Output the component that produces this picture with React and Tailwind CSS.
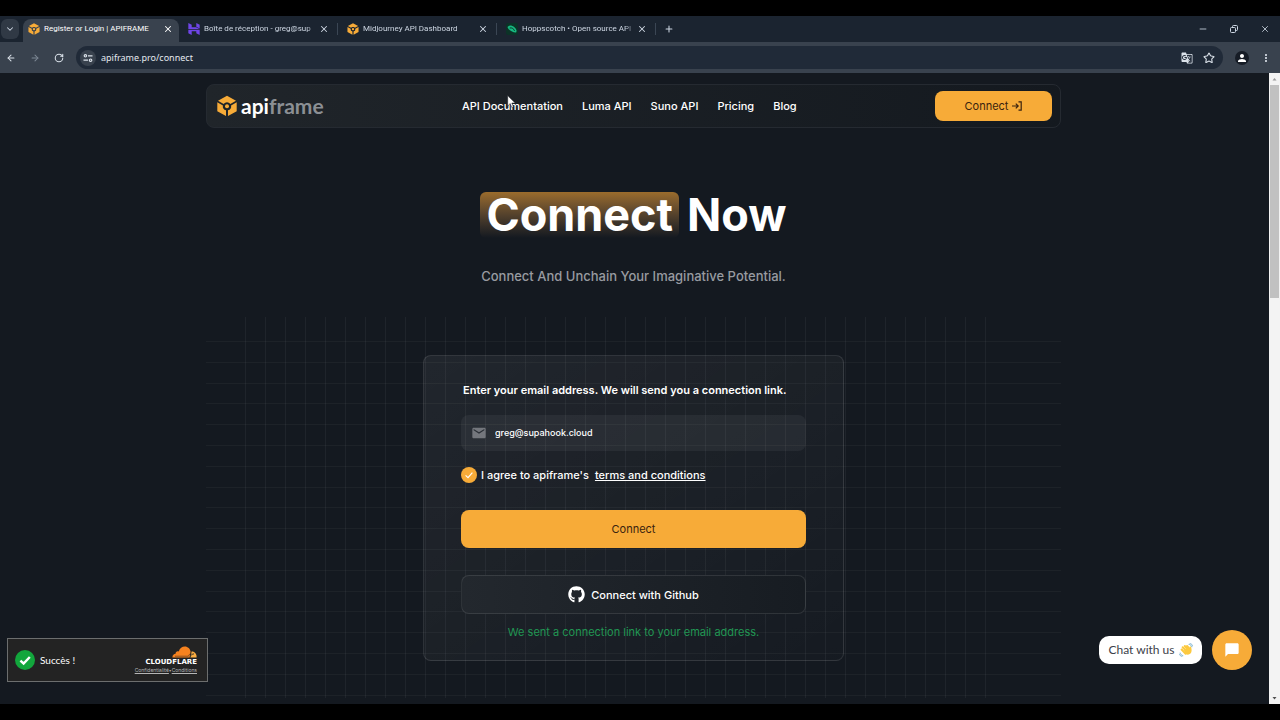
import { ArrowLeft, ArrowRight, RotateCw, ChevronDown, X, Plus, Minus, Star } from "lucide-react";
import { MdEmail, MdChatBubble, MdPerson, MdMoreVert, MdGTranslate } from "react-icons/md";
import { FaGithub } from "react-icons/fa";

function Cube({ className, hole = "#14191f" }) {
  return (
    <svg viewBox="0 0 20 21" className={className} aria-hidden="true">
      <path d="M10 0.3 19 5.2 13.3 8.4A4.2 4.2 0 0 0 6.7 8.4L1 5.2Z" fill="#f7ab38" />
      <path d="M0.3 6.8 5.9 10A4.2 4.2 0 0 0 9 14.8V20.6L0.3 15.8Z" fill="#f7ab38" />
      <path d="M19.7 6.8 14.1 10A4.2 4.2 0 0 1 11 14.8V20.6L19.7 15.8Z" fill="#f7ab38" />
      <circle cx="10" cy="10.8" r="3.3" fill={hole} />
      <circle cx="10" cy="10.8" r="2" fill="#f7ab38" />
    </svg>
  );
}

function HostingerMark({ className }) {
  return (
    <svg viewBox="0 0 11 11" className={className} aria-hidden="true">
      <path d="M0.3 0 3.4 1.6V4H7.4L10.5 5.6H0.3Z" fill="#6f45e8" />
      <path d="M7.6 0 10.7 1.6V5L7.6 3.4Z" fill="#6f45e8" />
      <path d="M0.3 6.2H10.7V11L7.6 9.4V7.6H3.4V11L0.3 9.4Z" fill="#6f45e8" />
    </svg>
  );
}

function HoppscotchMark({ className }) {
  return (
    <svg viewBox="0 0 11 11" className={className} aria-hidden="true">
      <rect width="11" height="11" rx="2" fill="#0c3327" />
      <path d="M1.4 3.6C3 1.6 5.2 2 7.4 3.6 9.6 5.2 10.2 7.2 9.2 8.8 7 9 2.4 7.2 1.4 3.6Z" fill="#16b981" />
      <path d="M3.4 4.6C5.2 4 7.4 5.4 7.8 7.2" fill="none" stroke="#0c3327" strokeWidth="0.9" />
    </svg>
  );
}

const tabs = [
  { title: "Register or Login | APIFRAME", icon: <Cube className="size-3 shrink-0" hole="#39424e" />, active: true },
  { title: "Boîte de réception - greg@sup", icon: <HostingerMark className="size-3 shrink-0" /> },
  { title: "Midjourney API Dashboard", icon: <Cube className="size-3 shrink-0" hole="#1b2430" /> },
  { title: "Hoppscotch • Open source API", icon: <HoppscotchMark className="size-3 shrink-0" /> },
];

function TabBar() {
  return (
    <div className="flex h-[26px] items-center bg-[#1b2430] text-[#cdd6e2]">
      <button aria-label="Search tabs" className="ml-px flex h-5 w-[18px] items-center justify-center rounded-md bg-[#303945]">
        <ChevronDown className="size-2.5" strokeWidth={2.5} />
      </button>
      <div className="ml-1 flex h-full pt-[3px] font-['Roboto',sans-serif] text-[8px]">
        {tabs.map((tab) => (
          <div
            key={tab.title}
            className={
              tab.active
                ? "flex w-[156px] items-center rounded-t-lg bg-[#39424e] pr-1.5 pb-[3px] pl-[5px] text-white"
                : "flex w-[159px] items-center pb-[3px] pl-[9px]"
            }
          >
            {tab.icon}
            <span
              className={
                tab.active
                  ? "ml-1 w-[114px] whitespace-nowrap"
                  : "ml-1 w-[114px] whitespace-nowrap [mask-image:linear-gradient(to_right,black_90%,transparent)]"
              }
            >
              {tab.title}
            </span>
            <button aria-label="Close tab" className="ml-auto">
              <X className="size-2.5" strokeWidth={2.5} />
            </button>
            {!tab.active && <span className="ml-2 h-3 w-px bg-[#3b4654]" />}
          </div>
        ))}
      </div>
      <button aria-label="New tab" className="ml-2">
        <Plus className="size-2.5" strokeWidth={2.5} />
      </button>
      <div className="ml-auto flex items-center gap-[21px] pr-2.5">
        <button aria-label="Minimize"><Minus className="size-2.5" /></button>
        <button aria-label="Restore">
          <svg viewBox="0 0 10 10" className="size-2.5" fill="none" stroke="currentColor">
            <rect x="1.5" y="3.5" width="5" height="5" rx="1" />
            <path d="M3.5 3V2.5a1 1 0 0 1 1-1h3a1 1 0 0 1 1 1v3a1 1 0 0 1-1 1H7" />
          </svg>
        </button>
        <button aria-label="Close"><X className="size-2.5" /></button>
      </div>
    </div>
  );
}

function Toolbar() {
  return (
    <div className="flex h-[31px] items-center bg-[#39424e] pr-2 text-[#dbe2ea]">
      <div className="flex items-center gap-3.5 pl-1.5">
        <button aria-label="Back"><ArrowLeft className="size-2.5" strokeWidth={2.5} /></button>
        <button aria-label="Forward" className="text-[#7d8794]"><ArrowRight className="size-2.5" strokeWidth={2.5} /></button>
        <button aria-label="Reload"><RotateCw className="size-2.5" strokeWidth={2.5} /></button>
      </div>
      <div className="ml-3 flex h-[23px] flex-1 items-center rounded-full bg-[#202a38] pr-2 pl-1">
        <button aria-label="Site information" className="flex size-4 items-center justify-center rounded-full bg-[#39424e]">
          <svg viewBox="0 0 10 10" className="size-2.5" fill="none" stroke="currentColor" strokeWidth="1.2">
            <circle cx="2.4" cy="2.8" r="1.2" />
            <path d="M5 2.8h4.5M0.5 7.2H5" />
            <circle cx="7.6" cy="7.2" r="1.2" />
          </svg>
        </button>
        <input
          aria-label="Address"
          defaultValue="apiframe.pro/connect"
          className="ml-[5px] min-w-0 flex-1 bg-transparent font-['Noto_Sans',sans-serif] text-[9px] text-[#e3e8ee] outline-none"
        />
        <button aria-label="Translate"><MdGTranslate className="size-3" /></button>
        <button aria-label="Bookmark" className="ml-2.5"><Star className="size-3" strokeWidth={2.2} /></button>
      </div>
      <button aria-label="Profile" className="ml-3 flex size-3.5 items-center justify-center rounded-full bg-[#161c26] text-white">
        <MdPerson className="size-3" />
      </button>
      <button aria-label="Menu" className="ml-[11px]"><MdMoreVert className="size-3" /></button>
    </div>
  );
}

const links = ["API Documentation", "Luma API", "Suno API", "Pricing", "Blog"];

function Nav() {
  return (
    <nav className="flex h-11 items-center rounded-lg border border-[#252a31] bg-linear-to-r from-[#20252a] to-[#14191f] pr-2 pl-2.5">
      <a href="#" className="flex items-center gap-1 font-['Lato',sans-serif] text-[21px] leading-6 font-bold text-white">
        <Cube className="h-[22px] w-5" hole="#1e2328" />
        <span>api<span className="text-[#8b8f94]">frame</span></span>
      </a>
      <ul className="ml-auto flex gap-[19px] text-[11px] leading-4 font-medium text-white">
        {links.map((link) => (
          <li key={link}><a href="#">{link}</a></li>
        ))}
      </ul>
      <button className="ml-auto flex h-[30px] w-[117px] items-center justify-center gap-1 rounded-lg bg-[#f7ab38] text-[11px] text-[#3a230f]">
        Connect
        <svg viewBox="0 0 10 10" className="size-2.5" fill="none" stroke="currentColor" strokeWidth="1.2">
          <path d="M0 5h6M3.8 2.6 6.2 5 3.8 7.4M6.5 0.8H9.2V9.2H6.5" />
        </svg>
      </button>
    </nav>
  );
}

function GridLines() {
  const columns = Array.from({ length: 38 }, (_, i) => 39 + i * 20);
  const rows = Array.from({ length: 18 }, (_, i) => 24 + Math.round(i * 20.8));
  return (
    <svg className="absolute inset-0 size-full" aria-hidden="true">
      {columns.map((x) => (
        <rect key={x} x={x} y="0" width="1" height="100%" fill="#ffffff" fillOpacity="0.05" />
      ))}
      {rows.map((y) => (
        <rect key={y} x="0" y={y} width="100%" height="1" fill="#ffffff" fillOpacity="0.04" />
      ))}
    </svg>
  );
}

function ConnectForm() {
  return (
    <form
      onSubmit={(e) => e.preventDefault()}
      className="relative mx-auto w-full max-w-[421px] rounded-lg border border-white/10 bg-linear-to-br from-white/6 to-white/1 px-[37px] pt-6 pb-[18px] text-[11px] leading-5 text-white"
    >
      <label htmlFor="email" className="block pl-0.5 font-semibold">
        Enter your email address. We will send you a connection link.
      </label>
      <div className="mt-[15px] flex h-9 items-center rounded-lg bg-white/5 pl-2.5">
        <MdEmail className="size-4 text-[#74777d]" />
        <input
          id="email"
          type="email"
          defaultValue="greg@supahook.cloud"
          className="ml-2 min-w-0 flex-1 bg-transparent text-[9px] font-medium outline-none"
        />
      </div>
      <div className="mt-4 flex h-4 items-center font-medium">
        <span className="grid size-4">
          <input
            id="terms"
            type="checkbox"
            defaultChecked
            className="col-start-1 row-start-1 size-4 appearance-none rounded-full bg-[#f7ab38]"
          />
          <svg viewBox="0 0 16 16" className="pointer-events-none col-start-1 row-start-1 size-4" fill="none" stroke="#fff" strokeWidth="1.1">
            <path d="M4.6 8.4 7 10.6 11.4 5.6" />
          </svg>
        </span>
        <label htmlFor="terms" className="ml-1">I agree to apiframe's</label>
        <a href="#" className="ml-1.5 underline">terms and conditions</a>
      </div>
      <button type="submit" className="mt-[27px] block h-[38px] w-full rounded-lg bg-[#f7ab38] text-[#3a230f]">
        Connect
      </button>
      <button type="button" className="mt-[27px] flex h-[39px] w-full items-center justify-center gap-1.5 rounded-lg border border-white/10 bg-linear-to-r from-[#23282e] to-[#171c22] font-medium">
        <FaGithub className="size-[17px]" />
        Connect with Github
      </button>
      <p className="mt-2 text-center text-[#219653]">We sent a connection link to your email address.</p>
    </form>
  );
}

function TurnstileBadge() {
  return (
    <div className="absolute bottom-[22px] left-[7px] flex h-11 w-[201px] items-center border border-[#6c6e6e] bg-[#232323] pr-2.5 pl-[7px] font-['Lato',sans-serif] text-white">
      <svg viewBox="0 0 20 20" className="size-5" aria-hidden="true">
        <circle cx="10" cy="10" r="10" fill="#12a63c" />
        <path d="M5.4 10.6 8.6 13.5 14.8 7" fill="none" stroke="#fff" strokeWidth="2.4" />
      </svg>
      <span className="ml-[5px] text-[10px]">Succès !</span>
      <div className="ml-auto flex flex-col items-end">
        <svg viewBox="0 0 25 12" className="h-3 w-[25px]" aria-hidden="true">
          <path d="M0.4 11.6C0.4 9 2 7.8 3.6 7.8 3.4 5.6 5.6 4.8 6.8 5.6 7.6 2 10.2 0.4 12.8 0.4 16 0.4 18.2 2.8 18.6 5.6L17.6 11.6Z" fill="#f6821f" />
          <path d="M18.4 11.6 19.6 5.6C22.6 5.4 24.8 8 24.6 11.6Z" fill="#fbad41" />
          <path d="M3 10.2H16.4L17.4 8.4 22 7.8 18.8 9.4 18.2 11" fill="none" stroke="#232323" strokeWidth="0.5" />
        </svg>
        <span className="font-['DejaVu_Sans',sans-serif] text-[7px] leading-[9px] font-bold">CLOUDFLARE</span>
        <span className="font-['Inter',sans-serif] text-[5px] leading-[7px] text-[#b5b5b5]">
          <a href="#" className="underline">Confidentialité</a>•<a href="#" className="underline">Conditions</a>
        </span>
      </div>
    </div>
  );
}

function WavingHand({ className }) {
  return (
    <svg viewBox="0 0 16 16" className={className} aria-hidden="true" fill="none">
      <path d="M3 7.5 7.6 12.2M4.2 4.8 9 9.6M6.6 3.4 11 8M9.2 3.4 12 6.4" stroke="#fcc93f" strokeWidth="2.3" strokeLinecap="round" />
      <path d="M5.6 8 10.4 4.6 12.2 6.4 12.4 3.6C14 3.6 14.4 6 14.4 8.6 14.4 12.4 10.6 14.8 7.6 12.4Z" fill="#fcc93f" />
      <path d="M11.4 1.6C13 1.6 14.4 2.8 14.6 4.4M12.6 0.6C14.4 0.8 15.4 2 15.6 3.4M1.4 11.4C1.6 13 2.8 14.2 4.4 14.4M0.6 12.8C1 14.4 2 15.2 3.4 15.4" stroke="#5b9fc4" strokeWidth="0.8" strokeLinecap="round" />
    </svg>
  );
}

function ChatWidget() {
  return (
    <div className="absolute right-[17px] bottom-[34px] flex items-center gap-2.5">
      <div className="flex h-7 w-[103px] items-center justify-center gap-1 rounded-[10px] bg-white font-['Lato',sans-serif] text-[12px] text-[#3c4048]">
        Chat with us
        <WavingHand className="size-3.5" />
      </div>
      <button aria-label="Open chat" className="flex size-10 items-center justify-center rounded-full bg-[#f7ab38] text-white">
        <MdChatBubble className="size-4" />
      </button>
    </div>
  );
}

function Scrollbar() {
  return (
    <div className="flex w-[11px] flex-col items-center bg-[#f3f3f3]">
      <svg viewBox="0 0 11 12" className="h-3 w-[11px]" aria-hidden="true"><path d="M3.5 7.5 5.5 5 7.5 7.5Z" fill="#9a9a9a" /></svg>
      <div className="h-[213px] w-[9px] bg-[#c1c1c1]" />
      <svg viewBox="0 0 11 12" className="mt-auto h-3 w-[11px]" aria-hidden="true"><path d="M3.5 5 5.5 7.5 7.5 5Z" fill="#505050" /></svg>
    </div>
  );
}

function Cursor() {
  return (
    <svg viewBox="0 0 9 14" className="pointer-events-none absolute top-[95px] left-[507px] h-3.5 w-[9px]" aria-hidden="true">
      <path d="M0.7 0.6V11L3.2 8.6 4.8 12.4 6.4 11.7 4.8 8H8.2Z" fill="#fff" stroke="#14191f" strokeWidth="0.5" />
    </svg>
  );
}

export default function App() {
  return (
    <div className="relative flex min-h-screen flex-col bg-black py-4">
      <header>
        <TabBar />
        <Toolbar />
      </header>
      <div className="flex flex-1">
        <main className="relative flex-1 bg-[#141920] pt-[11px] pr-0.5 font-['Inter',sans-serif]">
          <div className="mx-auto w-full max-w-[855px]">
            <Nav />
            <h1 className="mt-16 flex justify-center gap-2 text-[45px] leading-[46px] font-bold text-white">
              <span className="rounded-md bg-linear-to-b from-[#9b6c2c] to-[#141920] px-1.5">Connect</span>
              <span>Now</span>
            </h1>
            <p className="mt-7 text-center text-[13px] leading-5 font-medium text-[#989ba0]">
              Connect And Unchain Your Imaginative Potential.
            </p>
            <section className="relative mt-[31px] mb-1.5 pt-[38px] pb-[37px]">
              <GridLines />
              <ConnectForm />
            </section>
          </div>
          <TurnstileBadge />
          <ChatWidget />
        </main>
        <Scrollbar />
      </div>
      <Cursor />
    </div>
  );
}
